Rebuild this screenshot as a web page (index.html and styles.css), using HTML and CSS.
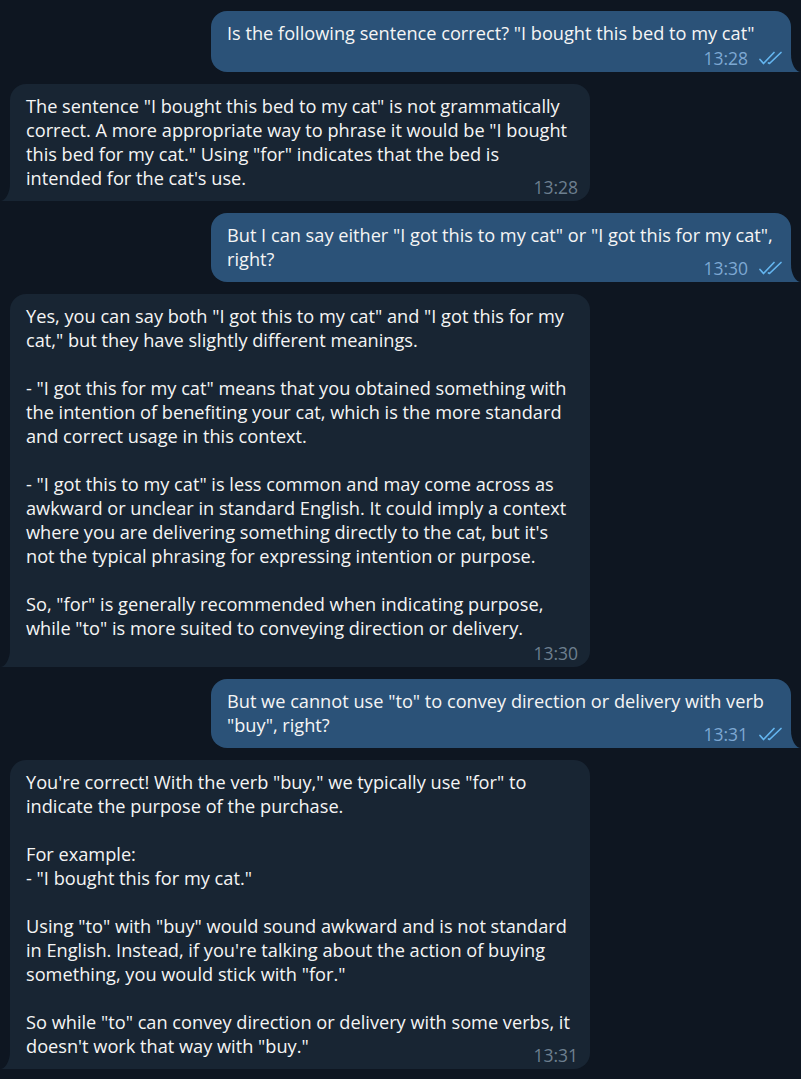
FILE: index.html
```html
<!DOCTYPE html>
<html lang="en">
<head>
    <meta charset="UTF-8">
    <meta name="viewport" content="width=device-width, initial-scale=1.0">
    <title>Chat</title>
    <link rel="stylesheet" href="styles.css">
</head>
<body>

<div class="chat">
    <!-- 13:28 -->
    <div class="bubble out">
        <div class="text">Is the following sentence correct? "I bought this bed to my cat"</div>
        <div class="meta newline"><span class="time">13:28</span><svg class="checks" viewBox="0 0 24 14"><path d="M1 8.5 L4.5 12.5 L15 1.5"/><path d="M9.5 12 L10.5 12.5 L22 1.5"/></svg></div>
    </div>

    <div class="bubble in">
        <div class="text">The sentence "I bought this bed to my cat" is not grammatically correct. A more appropriate way to phrase it would be "I bought this bed for my cat." Using "for" indicates that the bed is intended for the cat's use.</div>
        <div class="meta"><span class="time">13:28</span></div>
    </div>

    <!-- 13:30 -->
    <div class="bubble out">
        <div class="text">But I can say either "I got this to my cat" or "I got this for my cat", right?</div>
        <div class="meta"><span class="time">13:30</span><svg class="checks" viewBox="0 0 24 14"><path d="M1 8.5 L4.5 12.5 L15 1.5"/><path d="M9.5 12 L10.5 12.5 L22 1.5"/></svg></div>
    </div>

    <div class="bubble in">
        <div class="text">Yes, you can say both "I got this to my cat" and "I got this for my cat," but they have slightly different meanings.<br><br>- "I got this for my cat" means that you obtained something with the intention of benefiting your cat, which is the more standard and correct usage in this context.<br><br>- "I got this to my cat" is less common and may come across as awkward or unclear in standard English. It could imply a context where you are delivering something directly to the cat, but it's not the typical phrasing for expressing intention or purpose.<br><br>So, "for" is generally recommended when indicating purpose, while "to" is more suited to conveying direction or delivery.</div>
        <div class="meta newline"><span class="time">13:30</span></div>
    </div>

    <!-- 13:31 -->
    <div class="bubble out">
        <div class="text">But we cannot use "to" to convey direction or delivery with verb "buy", right?</div>
        <div class="meta"><span class="time">13:31</span><svg class="checks" viewBox="0 0 24 14"><path d="M1 8.5 L4.5 12.5 L15 1.5"/><path d="M9.5 12 L10.5 12.5 L22 1.5"/></svg></div>
    </div>

    <div class="bubble in">
        <div class="text">You're correct! With the verb "buy," we typically use "for" to indicate the purpose of the purchase.<br><br>For example:<br>- "I bought this for my cat."<br><br>Using "to" with "buy" would sound awkward and is not standard in English. Instead, if you're talking about the action of buying something, you would stick with "for."<br><br>So while "to" can convey direction or delivery with some verbs, it doesn't work that way with "buy."</div>
        <div class="meta"><span class="time">13:31</span></div>
    </div>
</div>

</body>
</html>
```

FILE: styles.css
```css
* {
    box-sizing: border-box;
}

body {
    margin: 0;
    padding: 0;
    background-color: #0e1621;
    font-family: "Open Sans", "DejaVu Sans", sans-serif;
    color: #f5f5f5;
}

.chat {
    display: flex;
    flex-direction: column;
    gap: 12px;
    padding: 11px 10px 12px 10px;
}

.bubble {
    position: relative;
    display: flex;
    flex-direction: column;
    width: 580px;
    padding: 10px 16px 6px 16px;
    border-radius: 16px;
}

.bubble.in {
    align-self: flex-start;
    background-color: #182533;
    border-bottom-left-radius: 0;
}

.bubble.out {
    align-self: flex-end;
    background-color: #2b5278;
    border-bottom-right-radius: 0;
}

/* bubble tails */
.bubble::before,
.bubble::after {
    content: "";
    position: absolute;
    bottom: 0;
    width: 10px;
    height: 18px;
}

.bubble.out::before {
    right: -10px;
    background-color: #2b5278;
}

.bubble.out::after {
    right: -10px;
    background-color: #0e1621;
    border-bottom-left-radius: 10px 18px;
}

.bubble.in::before {
    left: -10px;
    background-color: #182533;
}

.bubble.in::after {
    left: -10px;
    background-color: #0e1621;
    border-bottom-right-radius: 10px 18px;
}

.text {
    font-size: 18.2px;
    line-height: 24px;
}

.meta {
    align-self: flex-end;
    display: flex;
    align-items: center;
    height: 16px;
    margin-top: -11px;
    margin-right: -4px;
}

.meta.newline {
    margin-top: 5px;
}

.time {
    font-size: 17.5px;
    line-height: 16px;
}

.in .time {
    color: #6d7f8f;
}

.out .time {
    color: #7da8d3;
}

.out .meta {
    margin-right: -8px;
}

.checks {
    width: 24px;
    height: 14px;
    margin-left: 11px;
    fill: none;
    stroke: #64b5ef;
    stroke-width: 1.7;
    stroke-linecap: round;
    stroke-linejoin: round;
}
```
